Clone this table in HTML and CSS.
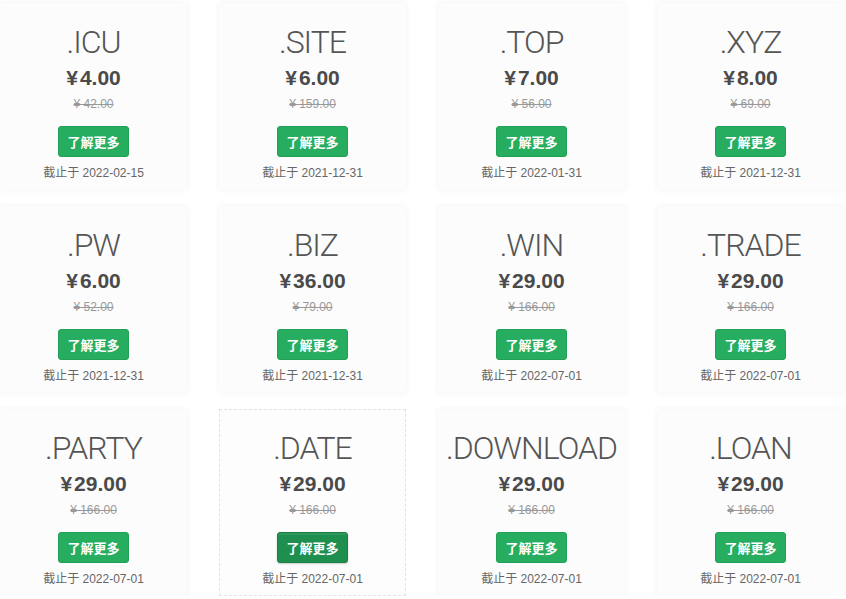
FILE: index.html
```html
<!DOCTYPE html>
<html lang="zh-CN">
<head>
    <meta charset="UTF-8">
    <meta name="viewport" content="width=device-width, initial-scale=1.0">
    <title>域名优惠</title>
    <link rel="stylesheet" href="styles.css">
</head>
<body>
    <div class="domain-list">
        <div class="domain-card">
            <h2 class="suffix">.ICU</h2>
            <div class="price"><span class="yen">¥</span>4.00</div>
            <div class="old-price">¥ 42.00</div>
            <a class="more-btn" href="#">了解更多</a>
            <div class="deadline">截止于 2022-02-15</div>
        </div>
        <div class="domain-card">
            <h2 class="suffix">.SITE</h2>
            <div class="price"><span class="yen">¥</span>6.00</div>
            <div class="old-price">¥ 159.00</div>
            <a class="more-btn" href="#">了解更多</a>
            <div class="deadline">截止于 2021-12-31</div>
        </div>
        <div class="domain-card">
            <h2 class="suffix">.TOP</h2>
            <div class="price"><span class="yen">¥</span>7.00</div>
            <div class="old-price">¥ 56.00</div>
            <a class="more-btn" href="#">了解更多</a>
            <div class="deadline">截止于 2022-01-31</div>
        </div>
        <div class="domain-card">
            <h2 class="suffix">.XYZ</h2>
            <div class="price"><span class="yen">¥</span>8.00</div>
            <div class="old-price">¥ 69.00</div>
            <a class="more-btn" href="#">了解更多</a>
            <div class="deadline">截止于 2021-12-31</div>
        </div>

        <div class="domain-card">
            <h2 class="suffix">.PW</h2>
            <div class="price"><span class="yen">¥</span>6.00</div>
            <div class="old-price">¥ 52.00</div>
            <a class="more-btn" href="#">了解更多</a>
            <div class="deadline">截止于 2021-12-31</div>
        </div>
        <div class="domain-card">
            <h2 class="suffix">.BIZ</h2>
            <div class="price"><span class="yen">¥</span>36.00</div>
            <div class="old-price">¥ 79.00</div>
            <a class="more-btn" href="#">了解更多</a>
            <div class="deadline">截止于 2021-12-31</div>
        </div>
        <div class="domain-card">
            <h2 class="suffix">.WIN</h2>
            <div class="price"><span class="yen">¥</span>29.00</div>
            <div class="old-price">¥ 166.00</div>
            <a class="more-btn" href="#">了解更多</a>
            <div class="deadline">截止于 2022-07-01</div>
        </div>
        <div class="domain-card">
            <h2 class="suffix">.TRADE</h2>
            <div class="price"><span class="yen">¥</span>29.00</div>
            <div class="old-price">¥ 166.00</div>
            <a class="more-btn" href="#">了解更多</a>
            <div class="deadline">截止于 2022-07-01</div>
        </div>

        <div class="domain-card">
            <h2 class="suffix">.PARTY</h2>
            <div class="price"><span class="yen">¥</span>29.00</div>
            <div class="old-price">¥ 166.00</div>
            <a class="more-btn" href="#">了解更多</a>
            <div class="deadline">截止于 2022-07-01</div>
        </div>
        <div class="domain-card active">
            <h2 class="suffix">.DATE</h2>
            <div class="price"><span class="yen">¥</span>29.00</div>
            <div class="old-price">¥ 166.00</div>
            <a class="more-btn" href="#">了解更多</a>
            <div class="deadline">截止于 2022-07-01</div>
        </div>
        <div class="domain-card">
            <h2 class="suffix">.DOWNLOAD</h2>
            <div class="price"><span class="yen">¥</span>29.00</div>
            <div class="old-price">¥ 166.00</div>
            <a class="more-btn" href="#">了解更多</a>
            <div class="deadline">截止于 2022-07-01</div>
        </div>
        <div class="domain-card">
            <h2 class="suffix">.LOAN</h2>
            <div class="price"><span class="yen">¥</span>29.00</div>
            <div class="old-price">¥ 166.00</div>
            <a class="more-btn" href="#">了解更多</a>
            <div class="deadline">截止于 2022-07-01</div>
        </div>
    </div>
</body>
</html>
```

FILE: styles.css
```css
/* Domain promo grid */
body {
    margin: 0;
    background-color: #ffffff;
    color: #555555;
    font-family: "Liberation Sans", Arial, "Noto Sans CJK SC", sans-serif;
    overflow: hidden;
}

.domain-list {
    display: grid;
    grid-template-columns: repeat(4, 187px);
    column-gap: 32px;
    row-gap: 16px;
    padding-top: 3px;
}

.domain-card {
    height: 187px;
    box-sizing: border-box;
    padding-top: 21px;
    background-color: #fcfcfc;
    border: 1px solid transparent;
    box-shadow: 0 0 6px rgba(0, 0, 0, 0.06); /* soft glow round the card */
    text-align: center;
    display: flex;
    flex-direction: column;
    align-items: center;
}

.domain-card.active {
    border: 1px dashed #e2e2e2;
    box-shadow: none;
    background-color: #fdfdfd;
}

.suffix {
    margin: -1px 0 0;
    font-family: Roboto, "Liberation Sans", sans-serif;
    font-weight: 300;
    font-size: 32px;
    line-height: 36px;
    letter-spacing: -1px;
    color: #555555;
    white-space: nowrap;
}

.price {
    margin-top: 5px;
    font-size: 21px;
    line-height: 26px;
    font-weight: bold;
    color: #4a4a4a;
}

.price .yen {
    margin-right: 2px;
}

.old-price {
    margin-top: 5px;
    font-size: 12px;
    line-height: 16px;
    color: #999999;
    text-decoration: line-through;
}

.more-btn {
    display: block;
    margin-top: 14px;
    height: 31px;
    padding: 0 8px;
    box-sizing: border-box;
    border-radius: 3px;
    background-color: #27ad5f;
    border: 1px solid #22a055;
    color: #ffffff;
    font-family: "Noto Sans CJK SC", sans-serif;
    font-size: 13px;
    font-weight: bold;
    line-height: 29px;
    text-decoration: none;
}

.domain-card.active .more-btn {
    background-color: #1e8f4e;
    border-color: #1a8045;
    box-shadow: inset 0 2px 0 rgba(255, 255, 255, 0.08), 0 1px 2px rgba(0, 0, 0, 0.2);
}

.deadline {
    margin-top: 8px;
    font-size: 12px;
    line-height: 16px;
    color: #666666;
}
```
